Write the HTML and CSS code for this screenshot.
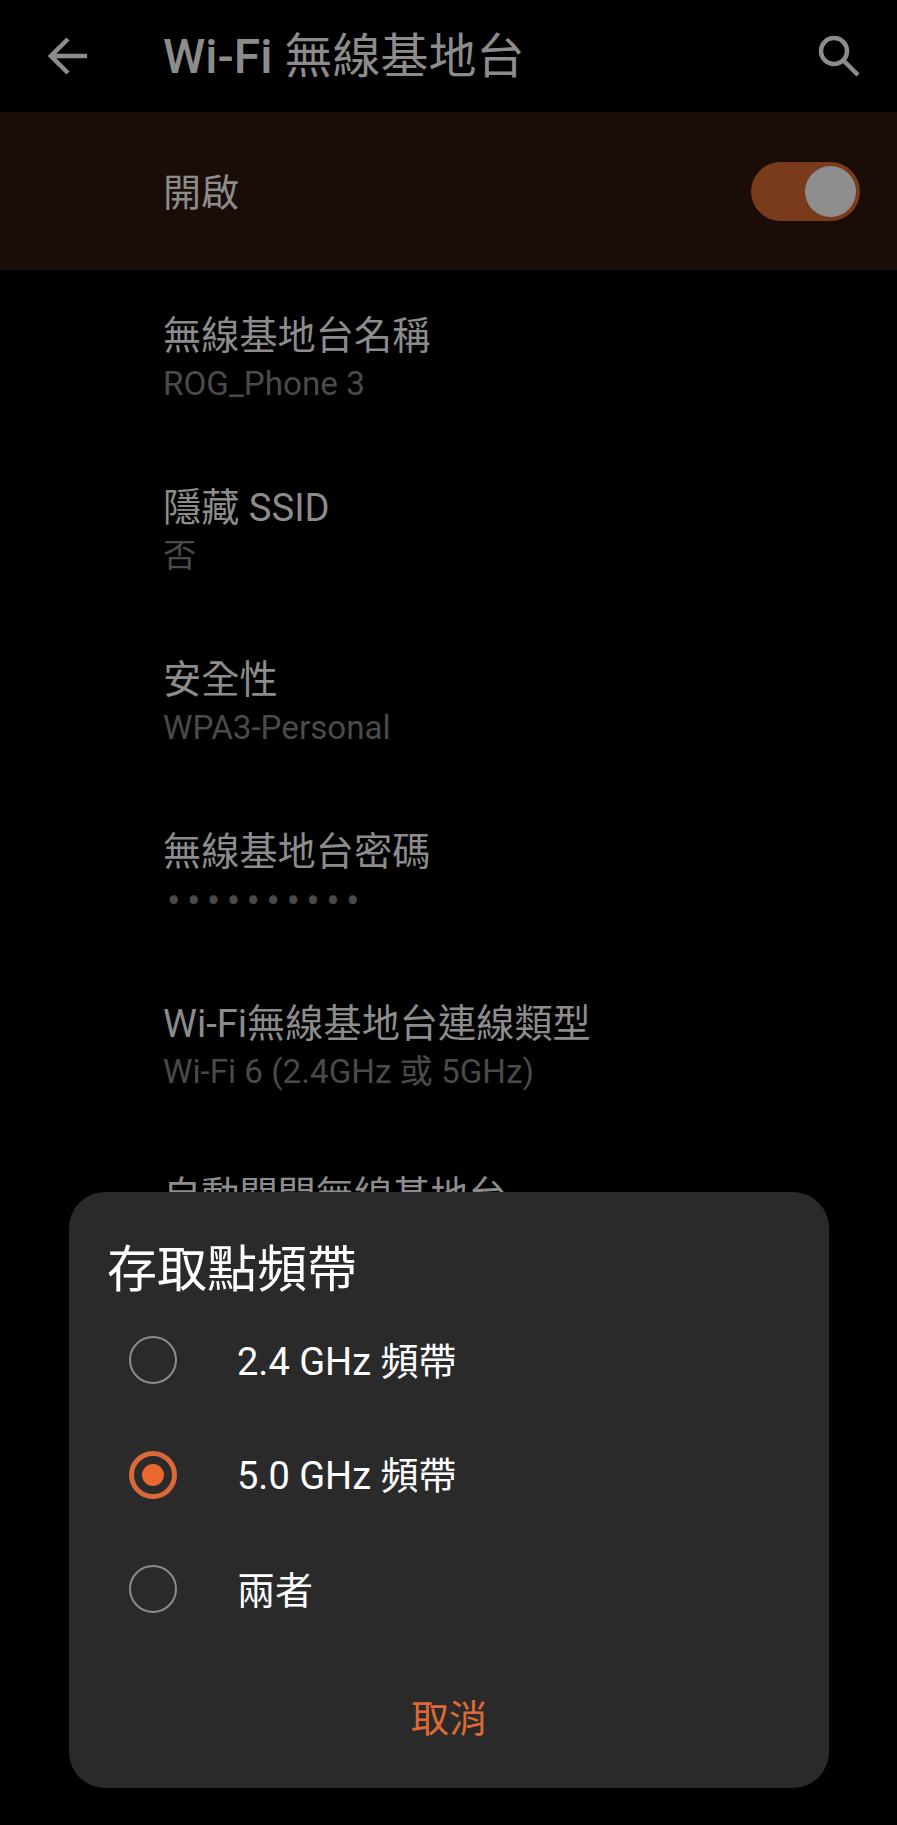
FILE: index.html
```html
<!DOCTYPE html>
<html lang='zh-Hant'>
<head>
  <title>Wi-Fi 無線基地台</title>

  <link rel="stylesheet" href="styles.css">
</head>
<body>
  <div id='screen'>
    <!-- Top Bar -->
    <div id='topBar'>
      <svg class='backIcon' width='40' height='38' viewBox='0 0 40 38'>
        <path d='M39 19H3M20 2 3 19l17 17' />
      </svg>
      <h1>Wi-Fi <span>無線基地台</span></h1>
      <svg class='searchIcon' width='42' height='42' viewBox='0 0 42 42'>
        <circle cx='16' cy='16' r='13' />
        <path d='M25.500 25.500 40 40' />
      </svg>
    </div>

    <!-- Master Switch -->
    <div id='masterRow'>
      <span>開啟</span>
      <div class='toggle'><div class='thumb'></div></div>
    </div>

    <!-- Settings -->
    <div class='row'>
      <div class='rowTitle'>無線基地台名稱</div>
      <div class='rowSub'>ROG_Phone 3</div>
    </div>
    <div class='row'>
      <div class='rowTitle'>隱藏 SSID</div>
      <div class='rowSub'>否</div>
    </div>
    <div class='row'>
      <div class='rowTitle'>安全性</div>
      <div class='rowSub'>WPA3-Personal</div>
    </div>
    <div class='row'>
      <div class='rowTitle'>無線基地台密碼</div>
      <div class='rowSub dots'>••••••••••</div>
    </div>
    <div class='row'>
      <div class='rowTitle'>Wi-Fi無線基地台連線類型</div>
      <div class='rowSub'>Wi-Fi 6 (2.4GHz 或 5GHz)</div>
    </div>
    <div class='row'>
      <div class='rowTitle'>自動關閉無線基地台</div>
    </div>

    <!-- Band Dialog -->
    <div id='dialog'>
      <h2>存取點頻帶</h2>
      <div class='option'>
        <div class='radio'></div>
        <span>2.4 GHz 頻帶</span>
      </div>
      <div class='option'>
        <div class='radio checked'></div>
        <span>5.0 GHz 頻帶</span>
      </div>
      <div class='option'>
        <div class='radio'></div>
        <span>兩者</span>
      </div>
      <div id='cancel'>取消</div>
    </div>
  </div>
</body>
</html>
```

FILE: styles.css
```css
body {
  margin: 0;
  background-color: black;
  font-family: Roboto, 'Noto Sans CJK TC', sans-serif;
}

#screen {
  position: relative;
  height: 1825px;
  overflow: hidden;
}

#topBar {
  display: flex;
  align-items: center;
  height: 112px;
  padding: 0 37px 0 48px;
}

#topBar h1 {
  flex: 1;
  margin: 0 0 8px 75px;
  font-size: 48px;
  font-weight: 500;
  color: #8c8c8c;
}

#topBar h1 span {
  font-weight: 400;
}

#topBar svg {
  fill: none;
  stroke: #8c8c8c;
  stroke-width: 4.500;
}

#masterRow {
  display: flex;
  align-items: center;
  justify-content: space-between;
  height: 158px;
  padding: 0 37px 0 163px;
  background-color: #1a0d07;
  font-size: 38px;
  color: #8c8c8c;
}

#masterRow span {
  margin-bottom: 4px;
}

.toggle {
  display: flex;
  align-items: center;
  justify-content: flex-end;
  width: 109px;
  height: 59px;
  padding-right: 4px;
  box-sizing: border-box;
  border-radius: 30px;
  background-color: #7a3a1c;
}

.thumb {
  width: 51px;
  height: 51px;
  border-radius: 50%;
  background-color: #8e8e8e;
}

.row {
  height: 172px;
  padding: 41px 0 0 163px;
  box-sizing: border-box;
}

.rowTitle {
  height: 49px;
  line-height: 50px;
  font-size: 38.200px;
  color: #8c8c8c;
}

.rowSub {
  height: 48px;
  line-height: 48px;
  font-size: 33.200px;
  color: #4a4a4a;
}

.dots {
  line-height: 52px;
  font-size: 40px;
  letter-spacing: 6.400px;
  text-indent: 4px;
}

#dialog {
  position: absolute;
  left: 69px;
  top: 1192px;
  width: 760px;
  height: 596px;
  border-radius: 36px;
  background-color: #2a2a2b;
  color: white;
}

#dialog h2 {
  margin: 0;
  padding: 45px 0 0 38px;
  height: 66px;
  line-height: 66px;
  font-size: 50px;
  font-weight: 400;
}

.option {
  display: flex;
  align-items: center;
  gap: 60px;
  height: 114.500px;
  padding-left: 60px;
  font-size: 38px;
}

.option span {
  margin-bottom: 4px;
}

.radio {
  width: 48px;
  height: 48px;
  box-sizing: border-box;
  border: 2.500px solid #8c8c8c;
  border-radius: 50%;
}

.radio.checked {
  display: flex;
  align-items: center;
  justify-content: center;
  border: 5px solid #d9683a;
}

.radio.checked::after {
  content: '';
  width: 22px;
  height: 22px;
  border-radius: 50%;
  background-color: #e8682f;
}

#cancel {
  margin-top: 47px;
  text-align: center;
  font-size: 38px;
  line-height: 50px;
  color: #dd6a36;
}
```
